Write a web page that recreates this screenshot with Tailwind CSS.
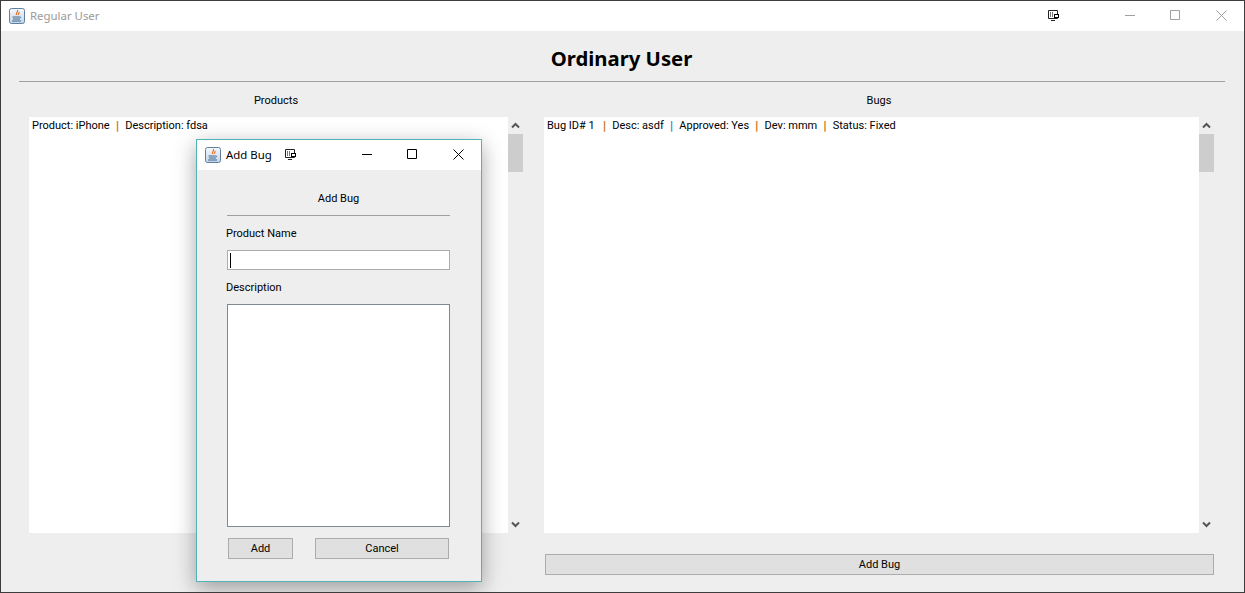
<!DOCTYPE html>
<html lang="en">
  <head>
    <meta charset="UTF-8" />
    <title>Regular User</title>
    <script src="https://cdn.jsdelivr.net/npm/@tailwindcss/browser@4"></script>
  </head>
  <body class="bg-[#eeeeee] overflow-hidden">
    <!-- Main window -->
    <div class="relative w-[1245px] h-[593px] border border-[#3c3c3c] bg-[#eeeeee] flex flex-col text-[11px] leading-[16px] text-black font-['Roboto',sans-serif] overflow-hidden">
      <!-- Title bar -->
      <div class="h-[30px] bg-white flex items-center shrink-0">
        <svg class="ml-[8px] w-[16px] h-[16px]" viewBox="0 0 16 16">
          <defs>
            <linearGradient id="javaBg" x1="0" y1="0" x2="0" y2="1">
              <stop offset="0" stop-color="#f6f8fb" />
              <stop offset="1" stop-color="#c3d4e6" />
            </linearGradient>
          </defs>
          <rect x="0.5" y="0.5" width="15" height="15" rx="2" fill="url(#javaBg)" stroke="#5f7f9f" />
          <path d="M8.500 2c1 2-2 3-1 5M10 4c.5 1.500-1 2-.5 3" stroke="#e0702a" stroke-width="1.200" fill="none" />
          <path d="M3.500 9h7l1.500.5M4 11h7M3 13h9" stroke="#40688f" stroke-width="1" fill="none" />
        </svg>
        <span class="ml-[5px] w-[68px] whitespace-nowrap text-[11.400px] font-['Noto_Sans',sans-serif] text-[#9a9a9a]">Regular User</span>
        <svg class="ml-[950px] mb-[1px] w-[11px] h-[11px]" viewBox="0 0 11 11">
          <path d="M.5.500h9v8h-9zM3 10.500h4" fill="none" stroke="#222" />
          <path d="M2.500 2v5M4.500 2v5" stroke="#777" />
          <rect x="6.500" y="4.500" width="4" height="3" fill="#fff" stroke="#000" />
        </svg>
        <svg class="ml-[66px] mb-[2px] w-[10px] h-[10px]" viewBox="0 0 10 10"><path d="M0 5.500h10" stroke="#a0a0a0" /></svg>
        <svg class="ml-[35px] mb-[2px] w-[10px] h-[10px]" viewBox="0 0 10 10"><path d="M.5.500h9v9h-9z" fill="none" stroke="#a0a0a0" /></svg>
        <svg class="ml-[36px] mb-[2px] w-[11px] h-[11px]" viewBox="0 0 11 11"><path d="M.5.500l10 10M10.500.500l-10 10" fill="none" stroke="#a0a0a0" /></svg>
      </div>

      <!-- Heading -->
      <h1 class="h-[50px] pt-[13px] text-center text-[20.300px] leading-[28px] font-bold shrink-0 ml-[-2px] font-['Noto_Sans',sans-serif]">Ordinary User</h1>
      <div class="h-px bg-[#a0a0a0] ml-[18px] mr-[19px] shrink-0"></div>

      <!-- Columns -->
      <div class="flex pl-[28px] pr-[30px] pt-[11px] gap-[21px]">
        <div class="w-[494px] shrink-0">
          <div class="h-[16px] text-center">Products</div>
          <div class="flex mt-[8px] h-[416px]">
            <div class="w-[479px] bg-white px-[3px] pt-[1px]">
              Product: iPhone <span class="mx-[3px] font-bold font-['DejaVu_Sans',sans-serif] text-[#c97a1f]">|</span> Description: fdsa
            </div>
            <div class="relative w-[15px] flex flex-col items-center">
              <svg class="absolute top-[5px] w-[9px] h-[7px]" viewBox="0 0 9 7"><path d="M1 5.500l3.500-3.500 3.500 3.500" fill="none" stroke="#555" stroke-width="2" /></svg>
              <div class="absolute top-[17px] w-[15px] h-[38px] bg-[#cdcdcd]"></div>
              <svg class="absolute bottom-[5px] w-[9px] h-[7px]" viewBox="0 0 9 7"><path d="M1 1.500l3.500 3.500 3.500-3.500" fill="none" stroke="#555" stroke-width="2" /></svg>
            </div>
          </div>
        </div>
        <div class="w-[670px] shrink-0">
          <div class="h-[16px] text-center">Bugs</div>
          <div class="flex mt-[8px] h-[416px]">
            <div class="w-[655px] bg-white px-[3px] pt-[1px]">
              Bug ID# 1 <span class="ml-[5px] mr-[3px] font-bold font-['DejaVu_Sans',sans-serif] text-[#c97a1f]">|</span> Desc: asdf <span class="mx-[3px] font-bold font-['DejaVu_Sans',sans-serif] text-[#3d8fd0]">|</span> Approved: Yes <span class="mx-[3px] font-bold font-['DejaVu_Sans',sans-serif] text-[#c97a1f]">|</span> Dev: mmm <span class="mx-[3px] font-bold font-['DejaVu_Sans',sans-serif] text-[#c97a1f]">|</span> Status: Fixed
            </div>
            <div class="relative w-[15px] flex flex-col items-center">
              <svg class="absolute top-[5px] w-[9px] h-[7px]" viewBox="0 0 9 7"><path d="M1 5.500l3.500-3.500 3.500 3.500" fill="none" stroke="#555" stroke-width="2" /></svg>
              <div class="absolute top-[17px] w-[15px] h-[38px] bg-[#cdcdcd]"></div>
              <svg class="absolute bottom-[5px] w-[9px] h-[7px]" viewBox="0 0 9 7"><path d="M1 1.500l3.500 3.500 3.500-3.500" fill="none" stroke="#555" stroke-width="2" /></svg>
            </div>
          </div>
          <button class="block ml-[1px] mt-[21px] w-[669px] h-[21px] bg-[#e0e0e0] border border-[#acacac] text-center">Add Bug</button>
        </div>
      </div>

      <!-- Add Bug dialog -->
      <div class="absolute left-[195px] top-[138px] w-[286px] h-[443px] border border-[#4fb3b8] bg-[#eeeeee] flex flex-col shadow-[0_6px_20px_rgba(0,0,0,0.35)]">
        <div class="h-[30px] bg-white flex items-center shrink-0">
          <svg class="ml-[8px] w-[16px] h-[16px]" viewBox="0 0 16 16">
            <rect x="0.5" y="0.5" width="15" height="15" rx="2" fill="url(#javaBg)" stroke="#5f7f9f" />
            <path d="M8.500 2c1 2-2 3-1 5M10 4c.5 1.500-1 2-.5 3" stroke="#e0702a" stroke-width="1.200" fill="none" />
            <path d="M3.500 9h7l1.500.5M4 11h7M3 13h9" stroke="#40688f" stroke-width="1" fill="none" />
          </svg>
          <span class="ml-[5px] w-[46px] whitespace-nowrap text-[11.400px] font-['Noto_Sans',sans-serif]">Add Bug</span>
          <svg class="ml-[13px] mb-[1px] w-[11px] h-[11px]" viewBox="0 0 11 11">
            <path d="M.5.500h9v8h-9zM3 10.500h4" fill="none" stroke="#222" />
            <path d="M2.500 2v5M4.500 2v5" stroke="#777" />
            <rect x="6.500" y="4.500" width="4" height="3" fill="#fff" stroke="#000" />
          </svg>
          <svg class="ml-[66px] mb-[2px] w-[10px] h-[10px]" viewBox="0 0 10 10"><path d="M0 5.500h10" stroke="#000" /></svg>
          <svg class="ml-[35px] mb-[2px] w-[10px] h-[10px]" viewBox="0 0 10 10"><path d="M.5.500h9v9h-9z" fill="none" stroke="#000" /></svg>
          <svg class="ml-[36px] mb-[2px] w-[11px] h-[11px]" viewBox="0 0 11 11"><path d="M.5.500l10 10M10.500.500l-10 10" fill="none" stroke="#000" /></svg>
        </div>
        <div class="flex flex-col pl-[29px] w-[253px]">
          <div class="mt-[21px] h-[16px] text-center pl-[1px]">Add Bug</div>
          <div class="mt-[8px] ml-[1px] h-px bg-[#a0a0a0]"></div>
          <div class="mt-[10px] h-[16px]">Product Name</div>
          <div class="mt-[8px] ml-[1px] h-[20px] bg-white border border-[#acacac] flex items-center pl-[2px]">
            <div class="w-px h-[15px] bg-black"></div>
          </div>
          <div class="mt-[10px] h-[16px]">Description</div>
          <div class="mt-[8px] ml-[1px] h-[223px] bg-white border border-[#808890]"></div>
          <div class="mt-[11px] flex ml-[2px]">
            <button class="w-[65px] h-[21px] bg-[#e0e0e0] border border-[#acacac]">Add</button>
            <button class="ml-[22px] w-[134px] h-[21px] bg-[#e0e0e0] border border-[#acacac]">Cancel</button>
          </div>
        </div>
      </div>
    </div>
  </body>
</html>
